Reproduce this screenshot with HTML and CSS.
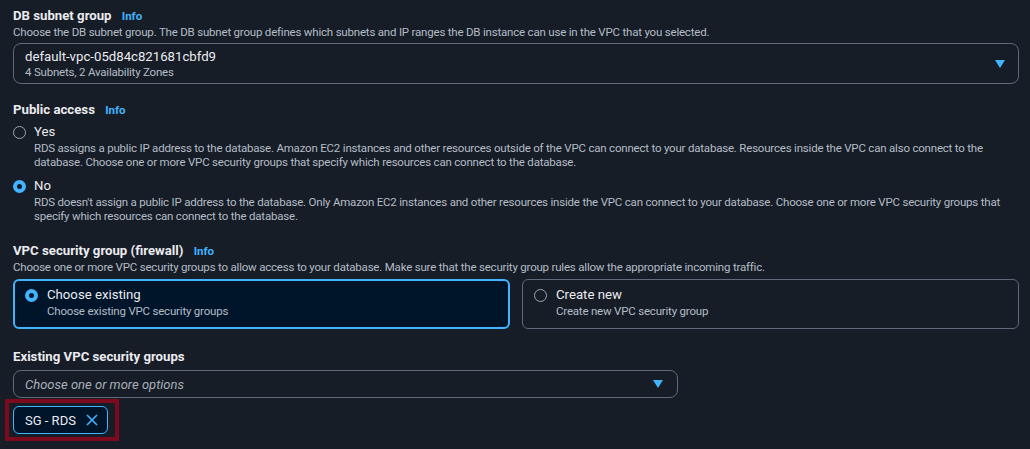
FILE: index.html
```html
<!DOCTYPE html>
<html>
<head>
<meta charset="utf-8">
<link rel="stylesheet" href="styles.css">
</head>
<body>
<div class="page">
  <section class="field first">
    <div class="label">DB subnet group <span class="info">Info</span></div>
    <div class="desc">Choose the DB subnet group. The DB subnet group defines which subnets and IP ranges the DB instance can use in the VPC that you selected.</div>
    <div class="select big">
      <div class="sel-text">
        <div class="sel-main">default-vpc-05d84c821681cbfd9</div>
        <div class="sel-sub">4 Subnets, 2 Availability Zones</div>
      </div>
      <span class="caret"></span>
    </div>
  </section>

  <section class="field access">
    <div class="label">Public access <span class="info">Info</span></div>
    <div class="radio-row">
      <span class="radio"></span>
      <div class="radio-body">
        <div class="radio-title">Yes</div>
        <div class="desc">RDS assigns a public IP address to the database. Amazon EC2 instances and other resources outside of the VPC can connect to your database. Resources inside the VPC can also connect to the database. Choose one or more VPC security groups that specify which resources can connect to the database.</div>
      </div>
    </div>
    <div class="radio-row">
      <span class="radio checked"></span>
      <div class="radio-body">
        <div class="radio-title">No</div>
        <div class="desc">RDS doesn't assign a public IP address to the database. Only Amazon EC2 instances and other resources inside the VPC can connect to your database. Choose one or more VPC security groups that specify which resources can connect to the database.</div>
      </div>
    </div>
  </section>

  <section class="field firewall">
    <div class="label">VPC security group (firewall) <span class="info">Info</span></div>
    <div class="desc">Choose one or more VPC security groups to allow access to your database. Make sure that the security group rules allow the appropriate incoming traffic.</div>
    <div class="tiles">
      <div class="tile selected">
        <span class="radio checked"></span>
        <div class="radio-body">
          <div class="radio-title">Choose existing</div>
          <div class="desc">Choose existing VPC security groups</div>
        </div>
      </div>
      <div class="tile">
        <span class="radio"></span>
        <div class="radio-body">
          <div class="radio-title">Create new</div>
          <div class="desc">Create new VPC security group</div>
        </div>
      </div>
    </div>
  </section>

  <section class="field last">
    <div class="label">Existing VPC security groups</div>
    <div class="select multi">
      <span class="placeholder">Choose one or more options</span>
      <span class="caret"></span>
    </div>
    <div class="token-wrap">
      <div class="token">
        <span class="token-text">SG - RDS</span>
        <svg class="x" width="12" height="12" viewBox="0 0 12 12"><path d="M1 1 L11 11 M11 1 L1 11" stroke="#42b4ff" stroke-width="1.6" fill="none"/></svg>
      </div>
    </div>
  </section>
</div>
</body>
</html>
```

FILE: styles.css
```css
* { box-sizing: border-box; }
html, body { margin: 0; padding: 0; }
body {
  background: #161d26;
  font-family: "Roboto", "Noto Sans", sans-serif;
  color: #dedee3;
  width: 1030px;
  height: 449px;
  overflow: hidden;
}
.page {
  padding: 7px 11px 0 13px;
}
.field { margin-bottom: 17px; }
.field.access { margin-bottom: 19px; }
.field.firewall { margin-bottom: 19px; }
.label {
  font-size: 13.2px;
  font-weight: 700;
  color: #ebebf0;
  line-height: 18px;
}
.info {
  color: #42b4ff;
  font-size: 11.5px;
  font-weight: 700;
  margin-left: 7px;
}
.desc {
  font-size: 11.5px;
  letter-spacing: -0.2px;
  line-height: 14px;
  color: #b4bcc6;
}
.select {
  border: 1px solid #5f6b7a;
  border-radius: 8px;
  display: flex;
  align-items: center;
  justify-content: space-between;
}
.select.big {
  margin-top: 4px;
  height: 41px;
  padding: 0 13px 0 11px;
}
.sel-main { font-size: 13.2px; line-height: 16px; color: #ebebf0; }
.sel-sub { font-size: 11.5px; letter-spacing: -0.2px; line-height: 14px; color: #b4bcc6; }
.caret {
  width: 0; height: 0;
  border-left: 5px solid transparent;
  border-right: 5px solid transparent;
  border-top: 8px solid #42b4ff;
}
.radio-row {
  display: flex;
  gap: 8px;
  margin-top: 4px;
}
.radio-row + .radio-row { margin-top: 8px; }
.radio {
  flex: none;
  width: 13px; height: 13px;
  border-radius: 50%;
  border: 1.5px solid #9aa4b0;
  margin-top: 3px;
}
.radio.checked {
  border: 4px solid #42b4ff;
  background: #0f1b2a;
}
.radio-title { font-size: 13.2px; line-height: 18px; color: #ebebf0; }
.tiles {
  display: flex;
  gap: 12px;
  margin-top: 5px;
}
.tile {
  flex: 1;
  height: 50px;
  border: 1px solid #5f6b7a;
  border-radius: 6px;
  display: flex;
  gap: 9px;
  padding: 6px 12px 0 11px;
}
.tile .radio { margin-top: 3px; }
.tile.selected {
  border: 2px solid #42b4ff;
  background: #00142a;
  padding: 5px 11px 0 10px;
}
.tile .radio-title { line-height: 18px; }
.select.multi {
  margin-top: 4px;
  width: 665px;
  height: 28px;
  padding: 0 14px 0 11px;
}
.placeholder {
  font-style: italic;
  font-size: 13px;
  color: #a8b0ba;
}
.token-wrap {
  margin-top: 1px;
  margin-left: -8px;
  width: 114px;
  height: 42px;
  border: 4px solid #7d0a1c;
  padding: 3px 0 0 4px;
}
.token {
  display: inline-flex;
  height: 28px;
  border: 1px solid #42b4ff;
  border-radius: 6px;
  background: #00142a;
  align-items: center;
  gap: 10px;
  padding: 0 9px 0 11px;
  font-size: 13px;
  color: #ebebf0;
  white-space: nowrap;
}
.x { flex: none; }
```
